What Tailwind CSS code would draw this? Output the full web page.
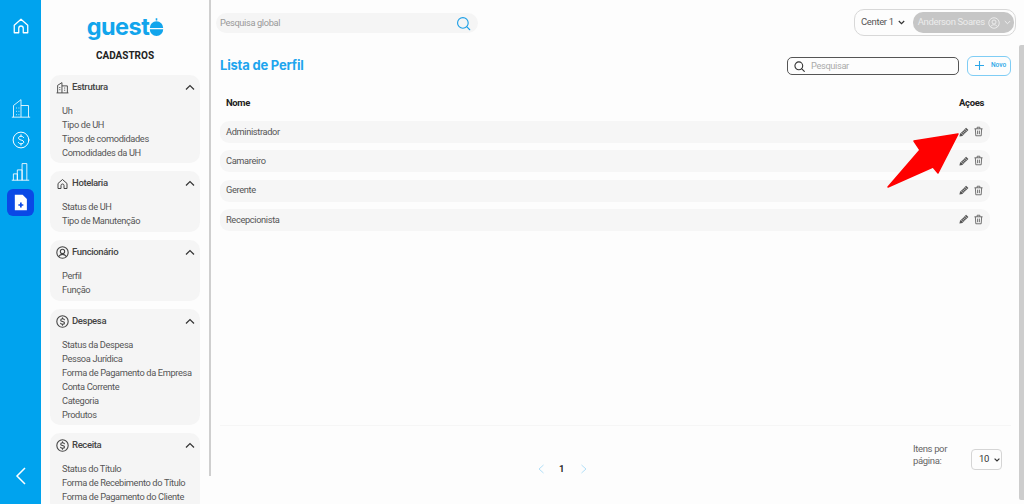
<!DOCTYPE html>
<html lang="pt-BR"><head><meta charset="utf-8"><title>Lista de Perfil</title>
<script src="https://cdn.jsdelivr.net/npm/@tailwindcss/browser@4"></script></head>
<body class="m-0 h-[504px] w-[1024px] overflow-hidden bg-[#fdfdfd] font-['Roboto','Noto_Sans',sans-serif] tracking-[-0.35px] text-[#4a4a4a]">
<div class="relative flex h-[504px] w-[1024px]">
  <!-- icon rail -->
  <nav class="flex h-full w-[41px] shrink-0 flex-col items-center bg-[#00a3ee] text-white">
    <svg class="mt-[17px] h-[18px] w-[18px]" viewBox="0 0 24 24" fill="none" stroke="currentColor" stroke-width="1.7" stroke-linejoin="round"><path d="M3 11 12 3l9 8v10h-6v-6a3 3 0 0 0-6 0v6H3z"/></svg>
    <svg class="mt-[63px] h-[20px] w-[20px]" viewBox="0 0 24 24" fill="none" stroke="currentColor" stroke-width="1"><path d="M1 23h22M3 23V9l9-7v21M12 9h9v14M6 12h1M9 12h1M6 16h1M9 16h1M6 20h1M9 20h1"/></svg>
    <svg class="mt-[13px] h-[18px] w-[18px]" viewBox="0 0 24 24" fill="none" stroke="currentColor" stroke-width="1.300" stroke-linecap="round"><circle cx="12" cy="12" r="10.500"/><path d="M15.500 8.800c-.6-1.200-1.900-1.800-3.500-1.800-2 0-3.300 1-3.300 2.500 0 3.400 7 1.800 7 5.200 0 1.500-1.500 2.400-3.700 2.400-1.600 0-2.900-.6-3.500-1.800M12 5v2M12 17v2"/></svg>
    <svg class="mt-[13px] h-[19px] w-[19px]" viewBox="0 0 24 24" fill="none" stroke="currentColor" stroke-width="1.100"><path d="M1 23h22M3 23v-8h5v8M8 23V10h6v13M14 23V2h6v21"/></svg>
    <div class="mt-[8px] flex h-[27px] w-[27px] items-center justify-center rounded-[6px] bg-[#0a49e6]">
      <svg class="h-[17px] w-[17px]" viewBox="0 0 24 24"><path fill="#fff" d="M4 1h11l6 6v16H4z"/><path stroke="#0a49e6" stroke-width="2.400" d="M12.500 12v7M9 15.500h7"/></svg>
    </div>
    <svg class="mt-auto mb-[19px] h-[18px] w-[12px]" viewBox="0 0 12 18" fill="none" stroke="currentColor" stroke-width="1.500"><path d="M10 1 2 9l8 8"/></svg>
  </nav>

  <!-- secondary sidebar -->
  <aside class="relative h-full w-[170px] shrink-0 overflow-hidden">
    <div class="mt-[15px] flex h-[26px] items-center justify-center pr-[1px] font-['Inter',sans-serif] text-[23.500px] leading-none font-bold tracking-[-0.5px] text-[#12a5ec]">
      <span class="mt-[-2px]">guest</span>
      <svg class="mb-[1px] h-[20px] w-[15px]" viewBox="0 0 19 25"><path fill="#12a5ec" d="M9.500 4a8.500 8.500 0 0 1 8.500 8.500H1A8.500 8.500 0 0 1 9.500 4zM1 14h17a8.500 8.500 0 0 1-17 0zM8.500 0h2v3h-2z"/></svg>
    </div>
    <h2 class="mt-[8px] mb-[13px] pr-[2px] text-center text-[10px] leading-[13px] font-bold tracking-normal text-[#222]">CADASTROS</h2>
    <div class="ml-[9px] flex w-[150px] flex-col gap-[8px]">
      <section class="h-[88px] rounded-[10px] bg-[#f5f5f5]">
        <header class="flex h-[24px] items-center pt-[1px] pl-[6px] pr-[5px]">
          <svg class="h-[13px] w-[13px]" viewBox="0 0 24 24" fill="none" stroke="#444" stroke-width="1.700"><path d="M1 22h22M3 22V8l8-5v19M11 9h10v13M6 12h2M6 16h2M15 13h2M15 17h2"/></svg>
          <span class="ml-[3px] text-[9.500px] font-medium text-[#444]">Estrutura</span>
          <svg class="ml-auto h-[7px] w-[10px]" viewBox="0 0 10 7" fill="none" stroke="#333" stroke-width="1.200"><path d="m1 5.500 4-4 4 4"/></svg>
        </header>
        <ul class="mt-[5px] pl-[12px] text-[9.250px] leading-[14px] text-[#555]"><li>Uh</li><li>Tipo de UH</li><li>Tipos de comodidades</li><li>Comodidades da UH</li></ul>
      </section>
      <section class="h-[61px] rounded-[10px] bg-[#f5f5f5]">
        <header class="flex h-[24px] items-center pt-[1px] pl-[6px] pr-[5px]">
          <svg class="h-[12px] w-[13px]" viewBox="0 0 24 24" fill="none" stroke="#444" stroke-width="2" stroke-linejoin="round"><path d="M3 11 12 3l9 8v10h-6v-6a3 3 0 0 0-6 0v6H3z"/></svg>
          <span class="ml-[3px] text-[9.500px] font-medium text-[#444]">Hotelaria</span>
          <svg class="ml-auto h-[7px] w-[10px]" viewBox="0 0 10 7" fill="none" stroke="#333" stroke-width="1.200"><path d="m1 5.500 4-4 4 4"/></svg>
        </header>
        <ul class="mt-[5px] pl-[12px] text-[9.250px] leading-[14px] text-[#555]"><li>Status de UH</li><li>Tipo de Manutenção</li></ul>
      </section>
      <section class="h-[61px] rounded-[10px] bg-[#f5f5f5]">
        <header class="flex h-[24px] items-center pt-[1px] pl-[6px] pr-[5px]">
          <svg class="h-[13px] w-[13px]" viewBox="0 0 24 24" fill="none" stroke="#444" stroke-width="2"><circle cx="12" cy="12" r="10.500"/><circle cx="12" cy="10" r="4"/><path d="M5 19.500c2-3 4.500-4 7-4s5 1 7 4"/></svg>
          <span class="ml-[3px] text-[9.500px] font-medium text-[#444]">Funcionário</span>
          <svg class="ml-auto h-[7px] w-[10px]" viewBox="0 0 10 7" fill="none" stroke="#333" stroke-width="1.200"><path d="m1 5.500 4-4 4 4"/></svg>
        </header>
        <ul class="mt-[5px] pl-[12px] text-[9.250px] leading-[14px] text-[#555]"><li>Perfil</li><li>Função</li></ul>
      </section>
      <section class="h-[116px] rounded-[10px] bg-[#f5f5f5]">
        <header class="flex h-[24px] items-center pt-[1px] pl-[6px] pr-[5px]">
          <svg class="h-[13px] w-[13px]" viewBox="0 0 24 24" fill="none" stroke="#444" stroke-width="2" stroke-linecap="round"><circle cx="12" cy="12" r="10.500"/><path d="M15.500 8.800c-.6-1.200-1.900-1.800-3.500-1.800-2 0-3.300 1-3.300 2.500 0 3.400 7 1.800 7 5.200 0 1.500-1.500 2.400-3.700 2.400-1.600 0-2.900-.6-3.500-1.800M12 5v2M12 17v2"/></svg>
          <span class="ml-[3px] text-[9.500px] font-medium text-[#444]">Despesa</span>
          <svg class="ml-auto h-[7px] w-[10px]" viewBox="0 0 10 7" fill="none" stroke="#333" stroke-width="1.200"><path d="m1 5.500 4-4 4 4"/></svg>
        </header>
        <ul class="mt-[5px] pl-[12px] text-[9.250px] leading-[14px] text-[#555]"><li>Status da Despesa</li><li>Pessoa Jurídica</li><li class="whitespace-nowrap">Forma de Pagamento da Empresa</li><li>Conta Corrente</li><li>Categoria</li><li>Produtos</li></ul>
      </section>
      <section class="rounded-[10px] bg-[#f5f5f5] pb-[8px]">
        <header class="flex h-[24px] items-center pt-[1px] pl-[6px] pr-[5px]">
          <svg class="h-[13px] w-[13px]" viewBox="0 0 24 24" fill="none" stroke="#444" stroke-width="2" stroke-linecap="round"><circle cx="12" cy="12" r="10.500"/><path d="M15.500 8.800c-.6-1.200-1.900-1.800-3.500-1.800-2 0-3.300 1-3.300 2.500 0 3.400 7 1.800 7 5.200 0 1.500-1.500 2.400-3.700 2.400-1.600 0-2.900-.6-3.500-1.800M12 5v2M12 17v2"/></svg>
          <span class="ml-[3px] text-[9.500px] font-medium text-[#444]">Receita</span>
          <svg class="ml-auto h-[7px] w-[10px]" viewBox="0 0 10 7" fill="none" stroke="#333" stroke-width="1.200"><path d="m1 5.500 4-4 4 4"/></svg>
        </header>
        <ul class="mt-[5px] pl-[12px] text-[9.250px] leading-[14px] text-[#555]"><li>Status do Título</li><li class="whitespace-nowrap">Forma de Recebimento do Título</li><li class="whitespace-nowrap">Forma de Pagamento do Cliente</li></ul>
      </section>
    </div>
    <div class="absolute top-0 right-0 h-[476px] w-[2px] bg-[#cfcfcf]"></div>
  </aside>

  <!-- main -->
  <main class="flex h-full min-w-0 flex-1 flex-col pl-[5px]">
    <div class="flex h-[45px] shrink-0 items-start">
      <div class="mt-[13px] flex h-[20px] w-[262px] items-center justify-between rounded-full bg-[#f5f5f5] pl-[4px] pr-[7px] text-[9.250px] text-[#999]">
        <span>Pesquisa global</span>
        <svg class="h-[15px] w-[15px]" viewBox="0 0 24 24" fill="none" stroke="#1d9fe6" stroke-width="1.800" stroke-linecap="round"><circle cx="11" cy="11" r="8.500"/><path d="m17.500 17.500 4.500 4.500"/></svg>
      </div>
      <div class="mt-[9px] ml-auto mr-[8px] flex h-[27px] w-[162px] items-center rounded-[10px] border border-[#d8d8d8] pl-[6px] pr-[1px] text-[9.500px]">
        <span class="whitespace-nowrap text-[#555]">Center 1</span>
        <svg class="ml-[4px] h-[5px] w-[7px]" viewBox="0 0 7 5" fill="none" stroke="#333" stroke-width="1.200"><path d="m.8 1 2.700 2.700L6.200 1"/></svg>
        <div class="ml-[8px] flex h-[21px] flex-1 items-center rounded-[10px] bg-[#c6c6c6] pl-[5px] text-[#ececec]">
          <span class="whitespace-nowrap">Anderson Soares</span>
          <svg class="ml-[3px] h-[12px] w-[12px]" viewBox="0 0 24 24" fill="none" stroke="#eee" stroke-width="1.800"><circle cx="12" cy="12" r="10.500"/><circle cx="12" cy="10" r="4"/><path d="M5 19.500c2-3 4.500-4 7-4s5 1 7 4"/></svg>
          <svg class="ml-[4px] h-[5px] w-[7px]" viewBox="0 0 7 5" fill="none" stroke="#eee"><path d="m.8 1 2.700 2.700L6.200 1"/></svg>
        </div>
      </div>
    </div>
    <div class="flex min-h-0 flex-1 flex-col pl-[4px] pr-[13px]">
      <div class="mt-[10px] flex h-[21px] shrink-0 items-center">
        <h1 class="font-['Inter',sans-serif] text-[13px] font-bold tracking-[-0.2px] text-[#1ea5ee]">Lista de Perfil</h1>
        <div class="mt-[1px] ml-auto flex h-[18px] w-[172px] items-center rounded-[5px] border border-[#555] pl-[6px] text-[9.250px] text-[#aaa]">
          <svg class="mr-[6px] h-[11px] w-[11px]" viewBox="0 0 24 24" fill="none" stroke="#333" stroke-width="2.400" stroke-linecap="round"><circle cx="10.500" cy="10.500" r="8.500"/><path d="m17 17 5.500 5.500"/></svg>
          Pesquisar
        </div>
        <div class="ml-[8px] flex h-[20px] w-[44px] items-center rounded-[6px] border border-[#7fcdf5] pl-[6px] text-[6.500px] font-medium tracking-normal text-[#2aa6e8]">
          <svg class="h-[11px] w-[11px]" viewBox="0 0 11 11" fill="none" stroke="#2aa6e8" stroke-width="1.100"><path d="M5.500 1v9M1 5.500h9"/></svg>
          <span class="ml-[6px]">Novo</span>
        </div>
      </div>
      <div class="mt-[20px] mr-[27px] flex h-[14px] shrink-0 items-center justify-between pl-[6px] text-[9.500px] leading-none font-bold text-[#222]">
        <span>Nome</span><span>Açoes</span>
      </div>
      <div class="mt-[11px] mr-[21px] flex flex-col gap-[7.330px]">
        <div class="flex h-[22px] items-center justify-between rounded-[9px] bg-[#f6f6f6] pl-[6px] pr-[7px] pb-[1px] text-[9.250px] text-[#555]"><span>Administrador</span><span class="flex items-center gap-[5px]"><svg class="h-[10px] w-[10px]" viewBox="0 0 24 24" fill="#555"><path d="M17 1.500 22.500 7 8 21.500 1 23l1.500-7z"/><path stroke="#f6f6f6" stroke-width="1.500" d="m14 5 5 5M11 8l5 5M8 11l5 5M5 14l5 5"/></svg><svg class="h-[11px] w-[9px]" viewBox="0 0 20 22" fill="none" stroke="#555" stroke-width="1.800"><path d="M1 5h18M7 5V1.500h6V5M3 5l1 15.500h12L17 5M8 9v8M12 9v8"/></svg></span></div>
        <div class="flex h-[22px] items-center justify-between rounded-[9px] bg-[#f6f6f6] pl-[6px] pr-[7px] pb-[1px] text-[9.250px] text-[#555]"><span>Camareiro</span><span class="flex items-center gap-[5px]"><svg class="h-[10px] w-[10px]" viewBox="0 0 24 24" fill="#555"><path d="M17 1.500 22.500 7 8 21.500 1 23l1.500-7z"/><path stroke="#f6f6f6" stroke-width="1.500" d="m14 5 5 5M11 8l5 5M8 11l5 5M5 14l5 5"/></svg><svg class="h-[11px] w-[9px]" viewBox="0 0 20 22" fill="none" stroke="#555" stroke-width="1.800"><path d="M1 5h18M7 5V1.500h6V5M3 5l1 15.500h12L17 5M8 9v8M12 9v8"/></svg></span></div>
        <div class="flex h-[22px] items-center justify-between rounded-[9px] bg-[#f6f6f6] pl-[6px] pr-[7px] pb-[1px] text-[9.250px] text-[#555]"><span>Gerente</span><span class="flex items-center gap-[5px]"><svg class="h-[10px] w-[10px]" viewBox="0 0 24 24" fill="#555"><path d="M17 1.500 22.500 7 8 21.500 1 23l1.500-7z"/><path stroke="#f6f6f6" stroke-width="1.500" d="m14 5 5 5M11 8l5 5M8 11l5 5M5 14l5 5"/></svg><svg class="h-[11px] w-[9px]" viewBox="0 0 20 22" fill="none" stroke="#555" stroke-width="1.800"><path d="M1 5h18M7 5V1.500h6V5M3 5l1 15.500h12L17 5M8 9v8M12 9v8"/></svg></span></div>
        <div class="flex h-[22px] items-center justify-between rounded-[9px] bg-[#f6f6f6] pl-[6px] pr-[7px] pb-[1px] text-[9.250px] text-[#555]"><span>Recepcionista</span><span class="flex items-center gap-[5px]"><svg class="h-[10px] w-[10px]" viewBox="0 0 24 24" fill="#555"><path d="M17 1.500 22.500 7 8 21.500 1 23l1.500-7z"/><path stroke="#f6f6f6" stroke-width="1.500" d="m14 5 5 5M11 8l5 5M8 11l5 5M5 14l5 5"/></svg><svg class="h-[11px] w-[9px]" viewBox="0 0 20 22" fill="none" stroke="#555" stroke-width="1.800"><path d="M1 5h18M7 5V1.500h6V5M3 5l1 15.500h12L17 5M8 9v8M12 9v8"/></svg></span></div>
      </div>
      <footer class="mt-auto flex h-[79px] shrink-0 border-t border-[#f6f6f6]">
        <div class="ml-[317px] mt-[38px] flex h-[10px] items-center text-[9.500px] font-semibold text-[#222]">
          <svg class="h-[10px] w-[8px]" viewBox="0 0 8 10" fill="none" stroke="#b3e0f8"><path d="M6.500 1 2 5l4.500 4"/></svg>
          <span class="ml-[14px]">1</span>
          <svg class="ml-[16px] h-[10px] w-[8px]" viewBox="0 0 8 10" fill="none" stroke="#b3e0f8"><path d="M1.500 1 6 5 1.500 9"/></svg>
        </div>
        <div class="ml-auto mt-[17px] mr-[9px] flex h-[32px] items-start">
          <p class="w-[58px] text-[9.500px] leading-[12px] text-[#666]">Itens por página:</p>
          <div class="mt-[6px] flex h-[21px] w-[31px] items-center rounded-[4px] border border-[#d5d5d5] pl-[7px] text-[9.500px] text-[#333]">
            10
            <svg class="ml-[5px] h-[4px] w-[6px]" viewBox="0 0 6 4" fill="none" stroke="#333" stroke-width="1.200"><path d="m.6.6 2.400 2.400L5.400.6"/></svg>
          </div>
        </div>
      </footer>
    </div>
  </main>

  <!-- page scrollbar -->
  <div class="absolute top-[45px] right-0 h-[455px] w-[5px] rounded-l-[2px] bg-[#cdcdcd]"></div>
  <!-- annotation arrow -->
  <svg class="absolute top-0 left-0 h-[504px] w-[1024px]" viewBox="0 0 1024 504" fill="#ff0000" stroke="#ff0000" stroke-width="1.500" stroke-linejoin="round"><path d="M958 134 914 141 920 150 888 187 933 167 938 173z"/></svg>
</div>
</body></html>
